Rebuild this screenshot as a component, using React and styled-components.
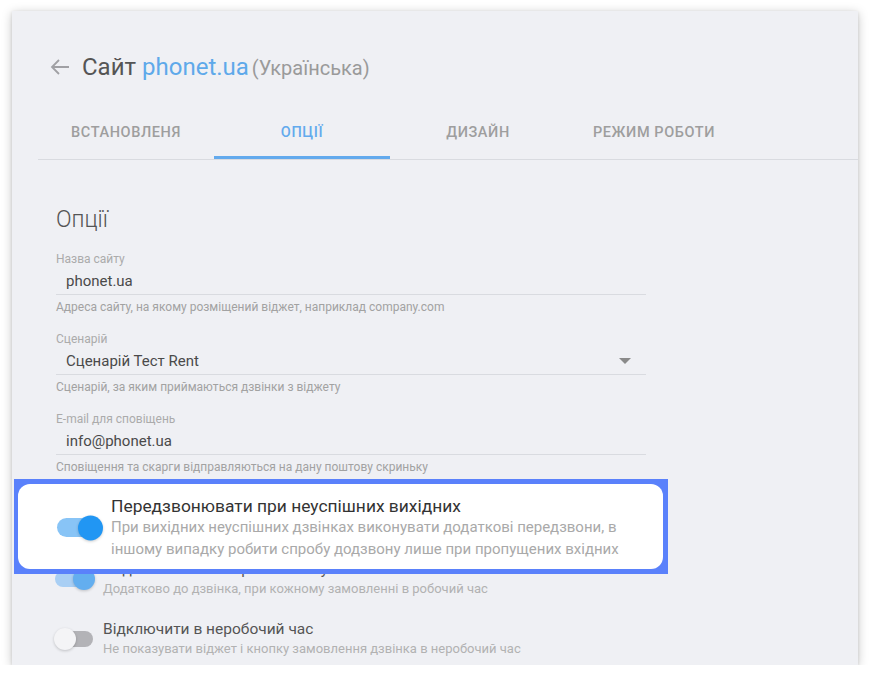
import React from "react";
import styled, { createGlobalStyle } from "styled-components";

const GlobalStyle = createGlobalStyle`
  html, body {
    margin: 0;
    padding: 0;
    background: #fff;
    font-family: Roboto, "Noto Sans", Arial, sans-serif;
  }
  * { box-sizing: border-box; }
`;

const Card = styled.div`
  position: relative;
  margin: 11px 0 0 12px;
  width: 846px;
  height: 654px;
  padding-left: 26px;
  background: #eff0f4;
  box-shadow: 0 2px 10px rgba(0, 0, 0, 0.22), 0 1px 3px rgba(0, 0, 0, 0.12);
  overflow: hidden;
`;

const Header = styled.div`
  display: flex;
  align-items: center;
  height: 32px;
  margin-top: 40px;
  padding-left: 10px;
`;

const Back = styled.span`
  display: flex;
  width: 24px;
  height: 24px;
  margin-right: 10px;
  color: #a0a0a4;
`;

const Title = styled.h1`
  margin: 0;
  font-size: 24px;
  font-weight: 400;
  color: #555;
  white-space: nowrap;
`;

const Site = styled.span`
  color: #5ea9ea;
`;

const Lang = styled.span`
  margin-left: 3px;
  font-size: 20px;
  color: #9a9a9a;
`;

const Tabs = styled.div`
  display: flex;
  margin-top: 24px;
  border-bottom: 1px solid #d9dbe0;
`;

const Tab = styled.div`
  width: 176px;
  height: 52px;
  display: flex;
  align-items: center;
  justify-content: center;
  padding-top: 1px;
  font-size: 14.5px;
  font-weight: 500;
  letter-spacing: 0.6px;
  color: ${(p) => (p.$active ? "#63aaed" : "#9e9e9e")};
  border-bottom: 3px solid ${(p) => (p.$active ? "#63aaed" : "transparent")};
`;

const Body = styled.div`
  padding-left: 18px;
`;

const Heading = styled.h2`
  margin: 45px 0 0;
  font-size: 23px;
  line-height: 30px;
  font-weight: 300;
  color: #555;
`;

const Field = styled.div`
  width: 590px;
  margin-top: 16px;
`;

const Label = styled.div`
  font-size: 12px;
  line-height: 16px;
  color: #ababab;
`;

const Value = styled.div`
  position: relative;
  margin-top: 4px;
  padding: 0 0 3px 10px;
  font-size: 15px;
  line-height: 20px;
  color: #4a4a4a;
  border-bottom: 1px solid #d9dbe0;
`;

const Caret = styled.span`
  position: absolute;
  right: 15px;
  top: 7px;
  width: 0;
  height: 0;
  border-left: 6px solid transparent;
  border-right: 6px solid transparent;
  border-top: 6px solid #8a8a8a;
`;

const Helper = styled.div`
  margin-top: 4px;
  font-size: 12px;
  line-height: 16px;
  color: #a2a2a2;
`;

const Toggles = styled.div`
  margin-top: 24px;
  display: flex;
  flex-direction: column;
  gap: 21px;
`;

const Row = styled.div`
  display: flex;
  align-items: center;
  gap: 10px;
  margin-left: -1px;
`;

const Track = styled.span`
  position: relative;
  flex: none;
  width: ${(p) => (p.$big ? 44 : 38)}px;
  height: ${(p) => (p.$big ? 19 : 16)}px;
  border-radius: 10px;
  background: ${(p) => p.$track};
`;

const Thumb = styled.span`
  position: absolute;
  top: 50%;
  left: ${(p) => (p.$on ? "auto" : "-1px")};
  right: ${(p) => (p.$on ? "-2px" : "auto")};
  width: ${(p) => (p.$big ? 25 : 22)}px;
  height: ${(p) => (p.$big ? 25 : 22)}px;
  transform: translateY(-50%);
  border-radius: 50%;
  background: ${(p) => p.$thumb};
  box-shadow: 0 1px 3px rgba(0, 0, 0, 0.2);
`;

const RowText = styled.div`
  display: flex;
  flex-direction: column;
`;

const RowTitle = styled.div`
  font-size: ${(p) => (p.$big ? 17.4 : 15.5)}px;
  line-height: 20px;
  color: ${(p) => (p.$big ? "#333" : "#555")};
  white-space: nowrap;
`;

const RowDesc = styled.div`
  font-size: ${(p) => (p.$big ? 15 : 13)}px;
  line-height: ${(p) => (p.$big ? 22 : 19)}px;
  color: ${(p) => (p.$big ? "#a9a9a9" : "#b2b2b2")};
  ${(p) => p.$big && "width: 530px;"}
`;

const Spotlight = styled.div`
  position: absolute;
  left: 2px;
  top: 468px;
  width: 654px;
  height: 95px;
  padding: 5px 5px 5px 4px;
  background: #5a81fb;
`;

const SpotBox = styled.div`
  height: 100%;
  display: flex;
  align-items: center;
  gap: 10px;
  padding: 2px 0 0 39px;
  background: #fff;
  border-radius: 12px;
`;

function Toggle({ on, big, track, thumb }) {
  return (
    <Track $big={big} $track={track}>
      <Thumb $on={on} $big={big} $thumb={thumb} />
    </Track>
  );
}

const fields = [
  { label: "Назва сайту", value: "phonet.ua", help: "Адреса сайту, на якому розміщений віджет, наприклад company.com" },
  { label: "Сценарій", value: "Сценарій Тест Rent", help: "Сценарій, за яким приймаються дзвінки з віджету", select: true },
  { label: "E-mail для сповіщень", value: "info@phonet.ua", help: "Сповіщення та скарги відправляються на дану поштову скриньку" },
];

const rows = [
  {
    title: "Передзвонювати при неуспішних вихідних",
    desc: "При вихідних неуспішних дзвінках виконувати додаткові передзвони",
    on: true,
  },
  {
    title: "Надсилати e-mail при кожному замовленні",
    desc: "Додатково до дзвінка, при кожному замовленні в робочий час",
    on: true,
  },
  {
    title: "Відключити в неробочий час",
    desc: "Не показувати віджет і кнопку замовлення дзвінка в неробочий час",
    on: false,
  },
];

export default function App() {
  return (
    <>
      <GlobalStyle />
      <Card>
        <Header>
          <Back>
            <svg width="24" height="24" viewBox="0 0 24 24" fill="none" stroke="currentColor" strokeWidth="1.8">
              <path d="M21 12H4M11 5l-7 7 7 7" />
            </svg>
          </Back>
          <Title>
            Сайт <Site>phonet.ua</Site>
            <Lang>(Українська)</Lang>
          </Title>
        </Header>

        <Tabs>
          <Tab>ВСТАНОВЛЕНЯ</Tab>
          <Tab $active>ОПЦІЇ</Tab>
          <Tab>ДИЗАЙН</Tab>
          <Tab>РЕЖИМ РОБОТИ</Tab>
        </Tabs>

        <Body>
          <Heading>Опції</Heading>
          {fields.map((f) => (
            <Field key={f.label}>
              <Label>{f.label}</Label>
              <Value>
                {f.value}
                {f.select && <Caret />}
              </Value>
              <Helper>{f.help}</Helper>
            </Field>
          ))}

          <Toggles>
            {rows.map((r) => (
              <Row key={r.title}>
                <Toggle
                  on={r.on}
                  track={r.on ? "#a9cff4" : "#b3b3b7"}
                  thumb={r.on ? "#63aeef" : "#f4f4f6"}
                />
                <RowText>
                  <RowTitle>{r.title}</RowTitle>
                  <RowDesc>{r.desc}</RowDesc>
                </RowText>
              </Row>
            ))}
          </Toggles>
        </Body>

        <Spotlight>
          <SpotBox>
            <Toggle on big track="#88c4f6" thumb="#2196f3" />
            <RowText>
              <RowTitle $big>Передзвонювати при неуспішних вихідних</RowTitle>
              <RowDesc $big>
                При вихідних неуспішних дзвінках виконувати додаткові передзвони, в іншому випадку
                робити спробу додзвону лише при пропущених вхідних
              </RowDesc>
            </RowText>
          </SpotBox>
        </Spotlight>
      </Card>
    </>
  );
}
